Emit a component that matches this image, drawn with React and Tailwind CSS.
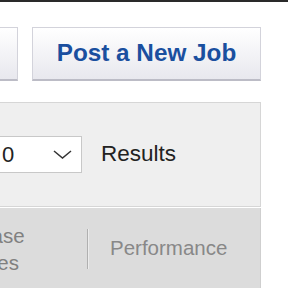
import React from 'react';

export default function App() {
  return (
    <div className="w-[288px] h-[288px] overflow-hidden bg-white font-['Liberation_Sans',Arial,sans-serif]">
      {/* top rule */}
      <div className="h-[2px] bg-[#2a2a2a]" />

      {/* action buttons */}
      <div className="flex gap-[14px] mt-[25px] -ml-[100px]">
        <button className="w-[118px] h-[54px] border border-[#d3d3db] border-b-2 border-b-[#bcbcc6] bg-gradient-to-b from-white to-[#e8e8ee]" />
        <button className="w-[229px] h-[54px] border border-[#d3d3db] border-b-2 border-b-[#bcbcc6] bg-gradient-to-b from-white to-[#e8e8ee] text-[24.3px] font-bold text-[#1a4f9f] leading-none pb-[1px]">
          Post a New Job
        </button>
      </div>

      {/* results panel */}
      <div className="mt-[21px] -ml-px mr-[27px]">
        <div className="h-[105px] border border-[#d6d6d6] bg-[#efefef] flex items-center">
          <div className="-ml-[20px] w-[102px] h-[37px] bg-white border border-[#c8c8c8] flex items-center justify-between pl-[21px] pr-[9px]">
            <span className="text-[22px] text-[#222] leading-none">0</span>
            <svg width="19" height="9" viewBox="0 0 19 9" fill="none" stroke="#333" strokeWidth="1.5">
              <path d="M1 1l8.5 7L18 1" />
            </svg>
          </div>
          <span className="ml-[19px] text-[22.5px] text-[#222] leading-none">Results</span>
        </div>

        <div className="mt-px h-[80px] bg-[#dcdcdc] border-r border-[#cfcfcf] flex items-center text-[20.5px] text-[#808080]">
          <div className="-ml-[61px] w-[149px] flex flex-col leading-[27px] pt-[1px]">
            <span>Purchase</span>
            <span>Licenses</span>
          </div>
          <div className="w-[2px] h-[40px] bg-[#b0b0b0] border-r border-[#ececec] mt-[1px]" />
          <span className="ml-[21px] text-[#888]">Performance</span>
        </div>
      </div>
    </div>
  );
}
